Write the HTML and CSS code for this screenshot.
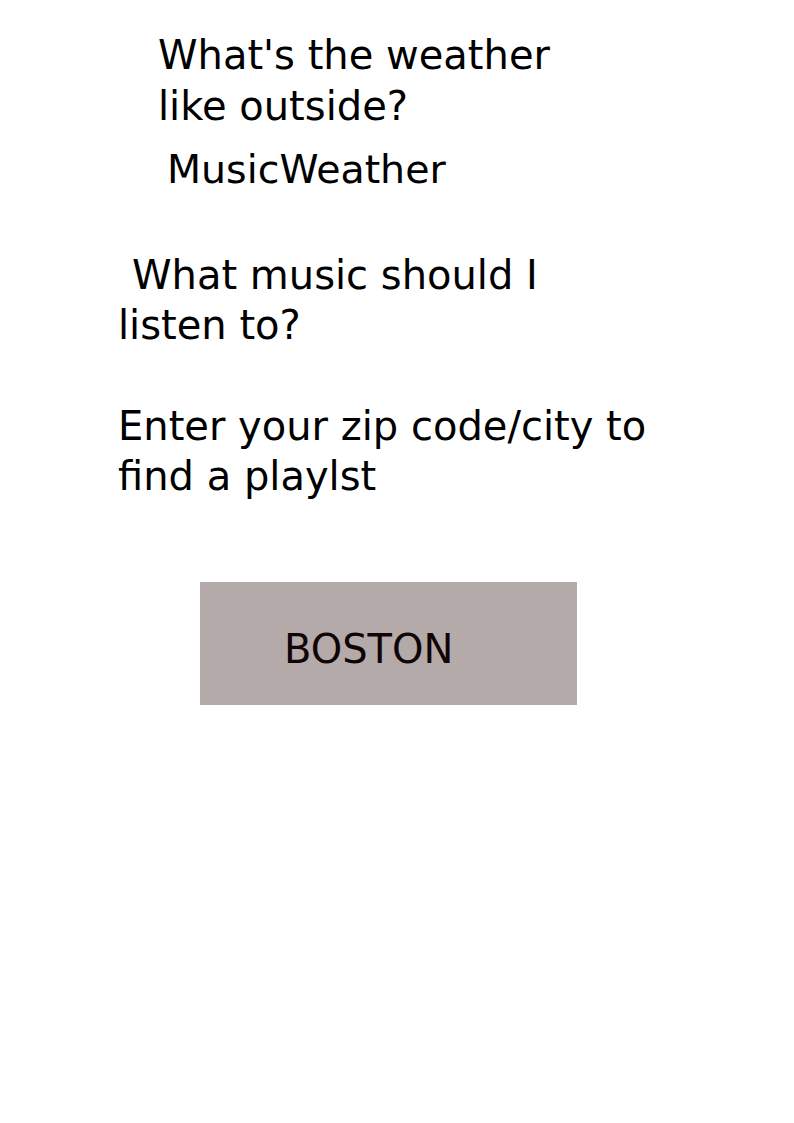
FILE: index.html
```html
<!DOCTYPE html>
<html lang="en">
<head>
<meta charset="utf-8">
<title>MusicWeather</title>
<link rel="stylesheet" href="styles.css">
</head>
<body>
<main class="page">
  <h1 class="question">What's the weather<br>like outside?</h1>
  <div class="brand">MusicWeather</div>
  <p class="prompt"><span class="indent">What music should I</span><br>listen to?<br><br>Enter your zip code/city to<br>find a playlst</p>
  <div class="city-box">BOSTON</div>
</main>
</body>
</html>
```

FILE: styles.css
```css
html, body {
  margin: 0;
  padding: 0;
  background: #ffffff;
}

body {
  font-family: "DejaVu Sans", Verdana, sans-serif;
  font-size: 40px;
  line-height: 50px;
  color: #000000;
}

.page {
  padding: 30px 0 0 118px;
}

.question {
  margin: 0 0 0 40px;
  font-size: 40px;
  font-weight: normal;
  line-height: 51px;
}

.brand {
  margin: 12px 0 0 49px;
  font-size: 39.5px;
  line-height: 50px;
}

.prompt {
  margin: 56px 0 0 0;
  font-size: 40px;
  line-height: 50.25px;
}

.indent {
  padding-left: 14px;
}

.city-box {
  margin: 81px 0 0 82px;
  width: 293px;
  height: 81px;
  padding: 42px 0 0 84px;
  background: #b3aaa9;
  color: #110404;
  font-size: 40px;
  line-height: 50px;
}
```
